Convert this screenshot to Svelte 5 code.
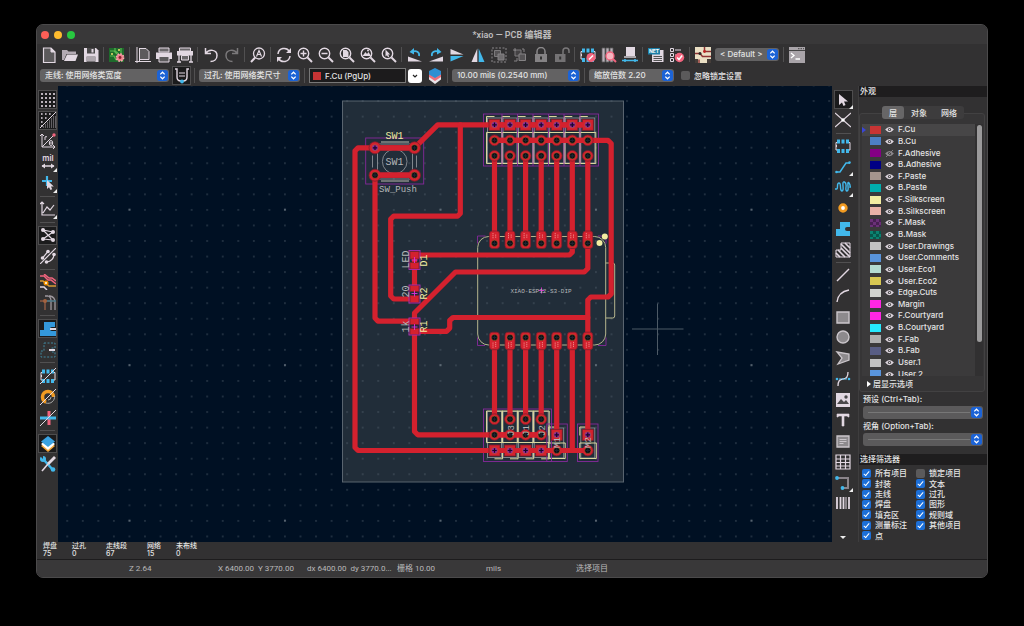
<script lang="ts">
	const W = '#e2d8e2'; // light icon parts
	const G = '#8d8a8d';
	const B = '#42b8eb';
	const P = '#f2647e';

	const magnifier = `<circle cx="6.5" cy="6.5" r="5.2" fill="none" stroke="${W}" stroke-width="1.4"/><path d="M10.5 10.5L15 15" stroke="${W}" stroke-width="2"/>`;
	const fpFrame = `<path d="M2 4.5H1V12H2M14 4.5h1V12h-1M1 7q2 1 0 2" fill="none" stroke="${W}" stroke-width="1"/><path d="M2 1.5h3v4H2zM6.5 1.5h3v4h-3zM11 1.5h3v4h-3zM2 11h3v4H2zM6.5 11h3v4h-3zM11 11h3v4h-3z" fill="${B}"/>`;

	// inner markup of every toolbar icon, on a 16x16 grid
	const icons: Record<string, string> = {
		new: `<path d="M2.5 1h7.5l4 4v10.500H2.500z" fill="#5c5a5c" stroke="${W}" stroke-width="1.2"/><path d="M10 1v4h4" fill="${W}" stroke="${W}"/>`,
		open: `<path d="M0 3h5l1.500 1.500H14V7H4.500L2 13H0z" fill="#b3aab3"/><path d="M5 7.500h11L13.500 14H2z" fill="${W}"/>`,
		save: `<path d="M1 1h12l2.500 2.500V15H1z" fill="${W}"/><path d="M4 1h8v5.500H4z" fill="#4a494a"/><path d="M8.500 2h2v3.500h-2z" fill="${W}"/><path d="M3.500 9.500h9V15h-9z" fill="#777377"/><path d="M4 11h8M4 13h8" stroke="${W}"/>`,
		board: `<path d="M0 1h15v14H0z" fill="#1e6b2c"/><path d="M1 4h4l3 3M6 1v3l3 2M1 9h4l2 4M12 1v5" stroke="#57b94f" fill="none" stroke-width="1.200"/><circle cx="3" cy="7" r="1" fill="#f2e36e"/><circle cx="10" cy="3" r="1" fill="#f2e36e"/><circle cx="11" cy="10.500" r="3.600" fill="#f0818d" stroke="#f7a9b0" stroke-width="1.600" stroke-dasharray="1.600 1.200"/><circle cx="11" cy="10.500" r="1.400" fill="#8d2030"/>`,
		page: `<path d="M4.500 1.500h6.500l3 3v8h-9.500z" fill="#5c5a5c" stroke="${W}"/><path d="M2 0v16M0 14.500h16M4.500 1v14" stroke="${W}" fill="none"/>`,
		print: `<path d="M3 1h10v4H3z" fill="#6a676a" stroke="${W}"/><path d="M0 5.500h16V12H0z" fill="${W}"/><path d="M3 9.500h10V15H3z" fill="#5c5a5c" stroke="${W}"/>`,
		plot: `<path d="M2.500 1h11v3h-11z" fill="#6a676a" stroke="${W}"/><path d="M0 4h16v4.500H0z" fill="${W}"/><path d="M2 8v7M0 15h4M14 8v7M12 15h4" stroke="${W}" stroke-width="1.300"/><path d="M4.500 8.500h7V13h-7z" fill="#6a676a" stroke="${W}"/>`,
		undo: `<path d="M2.500 1v5.500H8M2.500 6.500C6 1.500 14 2.500 14 8.500c0 4-3 6-6.500 6" fill="none" stroke="${W}" stroke-width="1.500"/>`,
		redo: `<path d="M13.500 1v5.500H8M13.500 6.500C10 1.500 2 2.500 2 8.500c0 4 3 6 6.500 6" fill="none" stroke="#7a787a" stroke-width="1.500"/>`,
		find: `<circle cx="9" cy="6.500" r="5.500" fill="none" stroke="${W}" stroke-width="1.300"/><path d="M5.200 10.500L1 15" stroke="${W}" stroke-width="2"/><path d="M6.500 9.500L9 3.500l2.500 6M7.500 7.500h3" stroke="${W}" stroke-width="1.200" fill="none"/>`,
		refresh: `<path d="M2 7a6.200 6.200 0 0 1 11.500-2.500M14 9A6.200 6.200 0 0 1 2.500 11.500" fill="none" stroke="${W}" stroke-width="1.500"/><path d="M15 1v5h-5zM1 15v-5h5z" fill="${W}"/>`,
		zoomin: magnifier + `<path d="M3.500 6.500h6M6.500 3.500v6" stroke="${W}" stroke-width="1.400"/>`,
		zoomout: magnifier + `<path d="M3.500 6.500h6" stroke="${W}" stroke-width="1.400"/>`,
		zoomfit: magnifier + `<path d="M4 3h3.500l2 2v5H4z" fill="${W}"/>`,
		zoomobj: magnifier + `<path d="M2.500 9l3-4 1.500 2 1.500-2 2.500 4z" fill="${W}"/><circle cx="8" cy="3.500" r="1" fill="${W}"/>`,
		zoomsel: magnifier + `<path d="M4.500 2.500v7l1.500-1.300 1 2 1.200-.6-1-2 2-.2z" fill="${W}"/>`,
		rotccw: `<path d="M1 9.500L15 14.500H1z" fill="${W}"/><path d="M5 5C9 3 13 5 12 9" fill="none" stroke="${B}" stroke-width="1.800"/><path d="M7 1v6.500L2.500 5z" fill="${B}"/>`,
		rotcw: `<path d="M15 9.500L1 14.500h14z" fill="${W}"/><path d="M11 5C7 3 3 5 4 9" fill="none" stroke="${B}" stroke-width="1.800"/><path d="M9 1v6.500L13.500 5z" fill="${B}"/>`,
		mirrorv: `<path d="M1.500 2v5.500h13z" fill="${W}"/><path d="M1.500 9v5.500l13-5.500z" fill="${B}"/>`,
		mirrorh: `<path d="M7.300 1.500V15H1.500z" fill="${W}"/><path d="M8.700 1.500V15h5.800z" fill="${B}"/>`,
		group: `<path d="M1 1h14v14H1z" fill="none" stroke="#8a888a" stroke-dasharray="2 1.500"/><path d="M3.500 3.500h6v6h-6z" fill="#565456" stroke="#7c7a7c"/><path d="M7 7h6v6H7z" fill="#706e70" stroke="#858385"/>`,
		ungroup: `<path d="M3 3h6v6H3z" fill="#444244" stroke="#7c7a7c"/><path d="M7 7h6.500v6.500H7z" fill="#565456" stroke="#858385"/><path d="M1 3h3M3 1v3M12 5V2h-2M5 11v3h-3" stroke="#858385" fill="none"/>`,
		lock: `<path d="M4 7V4.500a4 4 0 0 1 8 0V7" fill="none" stroke="#8a888a" stroke-width="1.500"/><path d="M2 7h12v8H2z" fill="#858385"/><path d="M8 9.500v3" stroke="#333" stroke-width="2"/>`,
		unlock: `<path d="M9 7V4a3 3 0 0 1 6 0v2" fill="none" stroke="#7a787a" stroke-width="1.500"/><path d="M1 7h10.500v8H1z" fill="#747274"/><path d="M6.200 9.500v3" stroke="#333" stroke-width="2"/>`,
		fpedit: fpFrame + `<circle cx="11" cy="10.500" r="4.500" fill="${P}"/><path d="M9 12.500l4-4" stroke="#fff" stroke-width="1.500"/>`,
		library: `<path d="M1 1h3v14H1zM5 1h3v14H5zM9 1h3v14H9z" fill="#b8afb8" stroke="#5c5a5c" stroke-width=".8"/><circle cx="9" cy="9" r="4" fill="#f6b5c0" stroke="${P}" stroke-width="1.300"/><path d="M12 12l3 3" stroke="${P}" stroke-width="2"/>`,
		update: `<path d="M4 0h9v9H4z" fill="${W}"/><path d="M2 9h12v2H2z" fill="#aaa5aa"/><path d="M0 13.500h16" stroke="${B}" stroke-width="1.600" fill="none"/><path d="M3 12v3M13 12v3" stroke="${B}" stroke-width="1.500"/>`,
		net: `<path d="M4 3h11.500v12H4z" fill="${W}"/><path d="M0 1h12v6.500H0z" fill="#1d7fa8"/><text x="6" y="6.200" font-size="5" font-weight="700" text-anchor="middle" fill="#fff" font-family="Inter, sans-serif">NET</text><path d="M5.500 9.500h8.500M5.500 11.500h8.500M5.500 13.500h8.500" stroke="#555"/>`,
		drc: `<path d="M1.500 1.500h3v3h-3zM1.500 6.500h3v3h-3zM1.500 11.500h3v3h-3z" fill="none" stroke="${W}"/><path d="M6 3h6M6 8h3" stroke="${W}"/><circle cx="10.500" cy="10.500" r="4.700" fill="${P}"/><path d="M8.200 10.500l1.800 2 3.200-4" fill="none" stroke="#fff" stroke-width="1.500"/>`,
		router: `<path d="M0 0h16v16H0z" fill="#eadfc4"/><path d="M0 6.500h5l2.500 3H16M9.500 0v4.500H16M4 16v-3.500" fill="none" stroke="#8e3434" stroke-width="1.500"/><circle cx="5" cy="6.500" r="1.500" fill="#2c2626"/><circle cx="9.500" cy="4.500" r="1.400" fill="#b22"/><path d="M12 12h4v4h-4zM0 12h3v4H0z" fill="#453d39"/>`,
		terminal: `<path d="M0 0h16v16H0z" fill="#a9a4a9"/><path d="M0 3.500h16" stroke="#444"/><path d="M9 1.700h1.500M11.500 1.700h1.500M14 1.700h1" stroke="#444"/><path d="M2 6l3 2.500L2 11M6.500 12H11" fill="none" stroke="#fff" stroke-width="1.300"/>`,
		trackauto: `<path d="M1 1h2v8q0 4 4 4h2q4 0 4-4V1h2" fill="none" stroke="${W}" stroke-width="1.400"/><path d="M5 5h6M5 8h6" stroke="${W}"/><circle cx="8" cy="13.500" r="1.900" fill="${B}"/>`,
		layers: `<path d="M8 6l6 2.500v3L8 16l-6-4.500v-3z" fill="#e8e4e8"/><path d="M8 3.500l6 2.500v3L8 13 2 9V6z" fill="#ed6f7c"/><path d="M8 0l6 3v3.500L8 10 2 6.500V3z" fill="#2e8fd2"/>`,
		grid: `<g fill="${W}">${[2, 6, 10, 14].map((y) => [2, 6, 10, 14].map((x) => `<circle cx="${x}" cy="${y}" r="1.100"/>`).join('')).join('')}</g>`,
		gridover: `<g stroke="${W}" stroke-width="1.600" stroke-dasharray="1.600 2.400"><path d="M1 2h11M1 6h8M1 10h4M1 14h2"/></g><g stroke="#aaa5aa" stroke-dasharray="1 1"><path d="M13 5h3M11 7h5M9 9h7M7 11h9M5 13h11M3 15h13"/></g><path d="M0 16L16 0" stroke="${W}"/>`,
		polar: `<path d="M2 1v13h13M0 3l2-2 2 2M13 12l2 2-2 2M2 14L14 2" fill="none" stroke="${W}"/><circle cx="14" cy="2" r="1.700" fill="${P}"/><path d="M5 7V4q1-1 2 0" fill="none" stroke="${W}"/><ellipse cx="11" cy="10" rx="1.700" ry="2.500" fill="none" stroke="${W}"/><path d="M9.500 10h3" stroke="${W}"/>`,
		mil: `<text x="8" y="7" font-size="8" font-weight="600" text-anchor="middle" fill="${W}" font-family="Inter, sans-serif">mil</text><path d="M2 12h12" stroke="${W}" stroke-width="1.600"/><path d="M5 9.500v5L1.500 12zM11 9.500v5l3.500-2.500z" fill="${W}"/>`,
		cursor: `<path d="M7 1v10M2 6h10" stroke="${B}" stroke-width="2.200"/><path d="M7 5v9l2-1.800L10.500 15l1.700-.8L11 11.500h2.800z" fill="${W}"/>`,
		axes: `<path d="M2 1v13h13M0 3l2-2 2 2M3 12l4-6 3 3 4-5" fill="none" stroke="${W}" stroke-width="1.200"/>`,
		ratsnest: `<path d="M3 3l10 2M3 3l10 10M3 12l10-7M3 12l10 1" stroke="${W}" stroke-width="1.200"/><g fill="${W}"><circle cx="3" cy="3" r="2"/><circle cx="13" cy="5" r="2"/><circle cx="3" cy="12" r="2"/><circle cx="13" cy="13" r="2"/></g>`,
		curved: `<path d="M0 16L16 0M2.500 10L8 3.500M6.500 14q7-1 7.500-7.500" fill="none" stroke="${W}" stroke-width="1.200"/><g fill="${W}"><circle cx="2.500" cy="10" r="1.800"/><circle cx="8" cy="3.500" r="1.800"/><circle cx="6.500" cy="14" r="1.800"/><circle cx="14" cy="6.500" r="1.800"/></g>`,
		contrast: `<path d="M0 2h4l4 4h3l5 4M4 0l5 4h3l4 3" fill="none" stroke="${P}" stroke-width="1.500"/><path d="M0 7h3l6 5h7" stroke="#d99a35" stroke-width="1.500" fill="none"/><path d="M0 13h4l3 3" fill="none" stroke="${W}" stroke-width="1.500"/><circle cx="6" cy="9" r="2.500" fill="#f29100"/><circle cx="6" cy="9" r="1" fill="#fff"/>`,
		netcolor: `<path d="M0 6h15M5 6v9" stroke="#8d5a43" stroke-width="1.500" fill="none"/><path d="M5 1h3q3 1 3 5v9M9 1h1q5 1 5 6v8" fill="none" stroke="#9e989e" stroke-width="1.300"/><path d="M7 6h9" stroke="#45788c" stroke-width="1.500"/><circle cx="5" cy="6" r="2" fill="#a36340"/>`,
		zonefill: `<path d="M4 1h11v5h-3a2 2 0 0 0 0 4h4v5H0V9h4z" fill="#3498db"/><path d="M10 7h6v2h-6z" fill="${W}"/>`,
		zoneoutline: `<path d="M4 1h11v5h-3a2 2 0 0 0 0 4h3v5H1V9h3z" fill="none" stroke="#41879d" stroke-dasharray="2 1.500"/><path d="M9 7h6v2H9z" fill="${W}"/>`,
		padsketch: fpFrame + `<path d="M0 16L16 0" stroke="${W}" fill="none"/>`,
		viasketch: `<circle cx="8" cy="8" r="5.500" fill="none" stroke="#f29b22" stroke-width="3.500"/><path d="M8 8h8v8H5z" fill="#323132"/><path d="M6 14a6.500 6.500 0 0 0 8.500-7M8 11a3 3 0 0 0 3-3" stroke="#aaa" fill="none"/><path d="M0 16L16 0" stroke="${W}"/>`,
		tracksketch: `<path d="M9 1v14" stroke="${P}" stroke-width="3"/><path d="M0 8h16" stroke="${B}" stroke-width="3"/><path d="M0 16L16 0" stroke="${W}"/>`,
		layermgr: `<path d="M8 5l7 5-7 6-7-6z" fill="#f2a63a"/><path d="M8 3l7 5-7 6-7-6z" fill="#fff"/><path d="M8 0l7 5.500L8 11 1 5.500z" fill="#3aa3e3"/>`,
		properties: `<path d="M4 4l9 10" stroke="${B}" stroke-width="2.500"/><circle cx="3" cy="3" r="3" fill="${B}"/><path d="M0 0h3v3z" fill="#323132"/><circle cx="13" cy="13.500" r="2.300" fill="${B}"/><path d="M15 1L8 8" stroke="${W}" stroke-width="2.800"/><path d="M8 8l-6 7" stroke="${W}" stroke-width="1.600"/>`,
		select: `<path d="M4 2v11l3-2.500 1.500 3.500 2-1-1.500-3.500h4z" fill="${W}"/>`,
		local: `<path d="M0 1l16 14M16 1L0 15" stroke="${W}" stroke-width="1.200"/><circle cx="8" cy="8" r="1.700" fill="#fff"/>`,
		footprint: fpFrame,
		track: `<path d="M1 13h4l6-9h4" fill="none" stroke="${B}" stroke-width="1.500"/><circle cx="1.500" cy="13" r="1.300" fill="${B}"/><circle cx="14.500" cy="3.500" r="1.300" fill="${B}"/>`,
		tune: `<path d="M0 10h1.500q1 0 1-3T4 4t1.500 4T7 12t1-5 1.500-4T11 8t1 4 1-5 1-3 1 4h1" fill="none" stroke="${B}" stroke-width="1.400"/>`,
		via: `<circle cx="8" cy="8" r="3.300" fill="#fff" stroke="#f29b22" stroke-width="2.800"/>`,
		zone: `<path d="M5 1h10v5h-3a2 2 0 0 0 0 4h3v5H1V8h4z" fill="${B}"/>`,
		rule: `<path d="M6 1h9v14H1V8h5z" fill="none" stroke="${W}"/><path d="M6 2l9 9M6 6l9 9M3 8l7 7M1 11l4 4M10 1l5 5" stroke="${W}" stroke-width="1.600"/>`,
		line: `<path d="M2 14L14 2" stroke="${W}" stroke-width="1.400"/>`,
		arc: `<path d="M2 14Q3 4 14 2" fill="none" stroke="${W}" stroke-width="1.400"/>`,
		rect: `<path d="M2 3h12v11H2z" fill="${G}" stroke="#cbc6cb" stroke-width="1.400"/>`,
		circle: `<circle cx="8" cy="8" r="6" fill="${G}" stroke="#cbc6cb" stroke-width="1.400"/>`,
		poly: `<path d="M2 2l12 2v6L3 14l4-6z" fill="${G}" stroke="#cbc6cb" stroke-width="1.300"/>`,
		bezier: `<path d="M3 15q0-7 5-7t5-7" fill="none" stroke="${W}" stroke-width="1.300"/><path d="M1 8h13" stroke="${B}" stroke-dasharray="2 1"/><circle cx="2" cy="8" r="1.300" fill="${B}"/><circle cx="14" cy="8" r="1.300" fill="${B}"/>`,
		image: `<path d="M1 1h14v14H1z" fill="${W}"/><path d="M2 12l4-5 3 3 2-2 3 4z" fill="#4a484a"/><circle cx="11" cy="5" r="1.700" fill="#4a484a"/>`,
		text: `<path d="M2 2h12v3h-1l-.6-1H9v10H7V4H3.600L3 5H2z" fill="${W}" stroke="${W}" stroke-width=".6"/>`,
		textbox: `<path d="M2 3h12v11H2z" fill="${G}" stroke="#cbc6cb" stroke-width="1.300"/><path d="M4.500 6.500h7M4.500 8.500h7M4.500 10.500h4" stroke="#c9c4c9"/>`,
		table: `<path d="M1 1h14v14H1zM1 5h14M1 8.500h14M1 12h14M5.500 1v14M10.500 1v14" fill="none" stroke="${W}" stroke-width="1.200"/>`,
		dimension: `<path d="M2 3h12M8 13h6M13 4v8" stroke="${W}" fill="none"/><circle cx="2" cy="3" r="1.900" fill="${B}"/><circle cx="7.500" cy="13" r="1.900" fill="${B}"/>`,
		barcode: `<path d="M2 2v12M5.500 2v12M8.500 2v12M14 2v12" stroke="${W}" stroke-width="1.800"/><path d="M11 2v12" stroke="${W}"/>`
	};

	// '|' is a separator
	const mainTools = 'new open save | board | page print plot | undo redo | find | refresh zoomin zoomout zoomfit zoomobj zoomsel | rotccw rotcw mirrorv mirrorh group ungroup lock unlock | fpedit library update | net drc | router'.split(' ');
	const leftTools = 'grid gridover polar mil cursor | axes | ratsnest curved | contrast netcolor | zonefill zoneoutline | padsketch viasketch tracksketch | layermgr properties'.split(' ');
	const rightTools = 'select local | footprint track tune via zone rule | line arc rect circle poly bezier image text textbox table dimension barcode'.split(' ');
	const active = ['grid', 'gridover', 'ratsnest', 'zonefill', 'layermgr', 'select', 'trackauto'];
	const hasMenu = ['mil', 'cursor', 'axes', 'select', 'track', 'tune', 'dimension'];

	const layers = [
		['F.Cu', '#c83434'],
		['B.Cu', '#4d7fc4'],
		['F.Adhesive', '#840084'],
		['B.Adhesive', '#000084'],
		['F.Paste', '#a4958e'],
		['B.Paste', '#00adad'],
		['F.Silkscreen', '#f2eda1'],
		['B.Silkscreen', '#e8b2a7'],
		['F.Mask', '#6b3079'],
		['B.Mask', '#0b8271'],
		['User.Drawings', '#c2c2c2'],
		['User.Comments', '#5994dc'],
		['User.Eco1', '#b4dbd2'],
		['User.Eco2', '#d8c852'],
		['Edge.Cuts', '#d0d2cd'],
		['Margin', '#ff26e2'],
		['F.Courtyard', '#ff26e2'],
		['B.Courtyard', '#26e9ff'],
		['F.Fab', '#afafaf'],
		['B.Fab', '#585d84'],
		['User.1', '#c2c2c2'],
		['User.2', '#5994dc']
	];

	const filters = [
		'所有项目', '锁定项目', '封装', '文本', '走线', '过孔', '焊盘', '图形',
		'填充区', '规则域', '测量标注', '其他项目', '点'
	];

	const counts = [
		['焊盘', '75'],
		['过孔', '0'],
		['走线段', '67'],
		['网络', '15'],
		['未布线', '0']
	];

	// board geometry
	const pins = [494.5, 510, 525.6, 541.2, 556.7, 572.3, 587.8];
	const lowerEnds = [419.7, 419.7, 419.7, 419.7, 435.3, 451, 435.3];
	const tracks = [
		'M375 148.300H358L355 151.300V448L358 451H587.800',
		'M375 148.300H414.500L437.700 125.300H587.800',
		'M375 175.700H414.500',
		'M460.300 125.300V214L457.600 216.700H393.700L390.700 219.700V296.500L393.700 299.500H414.500',
		'M375 175.700V318.500L378 321.700H414.500',
		'M414.500 290V255.500H569.500L572.300 252.700V243.500',
		'M587.800 243.500V269L584.300 272.500H455.500L414.500 313.500V322',
		'M414.500 331.800V432L417.700 435.300H541.200',
		'M414.500 331.800H446.500L449.700 328.600V321L453 318H587.800',
		'M587.800 338V300.500L590.800 297.500H608L611.200 294.500V144L608 140.800H494.500'
	];
</script>

{#snippet tool(name: string)}
	{#if name === '|'}
		<span class="sep"></span>
	{:else}
		<button class="tool" class:active={active.includes(name)} class:menu={hasMenu.includes(name)} aria-label={name}>
			<svg viewBox="0 0 16 16">{@html icons[name]}</svg>
		</button>
	{/if}
{/snippet}

{#snippet dropdown(label: string, value: string, cls: string)}
	<span class="dropdown {cls}">
		<select aria-label={label}><option>{value}</option></select>
		<svg class="stepper" viewBox="0 0 10 10"><rect width="10" height="10" rx="2.500" /><path d="M3 4L5 2l2 2M3 6l2 2 2-2" /></svg>
	</span>
{/snippet}

{#snippet hole(x: number, y: number, first: boolean)}
	<circle cx={x} cy={y} r="3.100" fill={first ? '#8f1f9a' : '#080c12'} stroke="#a8702c" stroke-width=".5" />
	<path d="M{x - 2.200} {y}h4.400M{x} {y - 2.200}v4.400" stroke={first ? '#150a2a' : '#1b2530'} stroke-width="1.200" />
{/snippet}

<div class="desktop">
	<div class="window">
		<header class="titlebar">
			<div class="lights">
				<button class="close" aria-label="Close"></button>
				<button class="minimize" aria-label="Minimize"></button>
				<button class="zoom" aria-label="Zoom"></button>
			</div>
			<h1>*xiao — PCB 编辑器</h1>
		</header>

		<div class="toolbar">
			{#each mainTools as name}{@render tool(name)}{/each}
			{@render dropdown('Variant', '< Default >', 'variant')}
			<span class="sep"></span>
			{@render tool('terminal')}
		</div>

		<div class="toolbar">
			{@render dropdown('Track width', '走线: 使用网络类宽度', 'w-track')}
			{@render tool('trackauto')}
			<span class="sep"></span>
			{@render dropdown('Via size', '过孔: 使用网络类尺寸', 'w-via')}
			<span class="sep"></span>
			<span class="layer-box">
				<i class="swatch"></i>
				<select aria-label="Layer"><option>F.Cu (PgUp)</option></select>
				<svg viewBox="0 0 14 14"><rect width="14" height="14" rx="3" fill="#fff" /><path d="M5 6l2 2 2-2" fill="none" stroke="#222" stroke-width="1.200" /></svg>
			</span>
			{@render tool('layers')}
			<span class="sep"></span>
			{@render dropdown('Grid', '10.00 mils (0.2540 mm)', 'w-grid')}
			<span class="sep"></span>
			{@render dropdown('Zoom', '缩放倍数 2.20', 'w-zoom')}
			<label class="check lock-check"><input type="checkbox" />忽略锁定设置</label>
		</div>

		<div class="workspace">
			<div class="side left">
				<div class="tools">{#each leftTools as name}{@render tool(name)}{/each}</div>
			</div>

			<div class="canvas">
				<svg viewBox="58 86 774 457" preserveAspectRatio="xMidYMid slice">
					<defs>
						<pattern id="minor" x="59.500" y="93.800" width="15.550" height="15.550" patternUnits="userSpaceOnUse">
							<rect x="7.200" y="7.200" width="1.100" height="1.100" fill="#5d6b78" />
						</pattern>
						<pattern id="major" x="51.800" y="287.900" width="155.500" height="155.500" patternUnits="userSpaceOnUse">
							<path d="M77.700 76.700v2M76.700 77.700h2" stroke="#7b8792" stroke-width=".7" />
						</pattern>
					</defs>
					<rect x="342.500" y="101.500" width="281" height="381" fill="#212d39" stroke="#59646f" />
					<rect x="58" y="86" width="774" height="457" fill="url(#minor)" />
					<rect x="58" y="86" width="774" height="457" fill="url(#major)" />

					<!-- fab outlines -->
					<g fill="none" stroke="#8b9095" stroke-width=".9">
						<circle cx="394.700" cy="162" r="12.300" />
						<rect x="377.500" y="144.500" width="35" height="35" />
						<path d="M372.500 156v12M416.500 156v12" />
						{#each pins as x}
							<rect x={x - 7} y="118.500" width="14" height="45" />
						{/each}
						{#each pins.slice(0, 4) as x}
							<rect x={x - 7} y="412" width="14" height="46" />
						{/each}
						<rect x="549.700" y="428.500" width="14" height="30" />
						<rect x="580.800" y="428.500" width="14" height="30" />
					</g>

					<!-- silkscreen -->
					<g fill="none" stroke="#d9d69b" stroke-width="1">
						<path d="M381 142.500h28M381 181.500h28" stroke="#6e7374" stroke-width="2" />
						{#each pins as x}
							<path d="M{x - 8} 133h16v31h-16zM{x - 8} 126v-9h8" />
						{/each}
						{#each pins.slice(0, 4) as x}
							<path d="M{x - 8} 443v-31.500h16v31.500zM{x} 459.300h8v-8" />
						{/each}
						<path d="M548.700 443.500h16.500v15.500h-16.500zM548.700 436v-8.500h8" />
						<path d="M579.800 443.500h16.500v15.500h-16.500zM579.800 436v-8.500h8" />
						<rect x="477.700" y="237" width="128" height="108.500" rx="11" stroke="#b6b68e" />
						<path d="M605.700 263.500h7q2 0 2 2v51q0 2-2 2h-7" stroke="#b6b68e" />
					</g>

					<!-- courtyards -->
					<g fill="none" stroke="#86299b" stroke-width=".9">
						<rect x="365.700" y="138.500" width="58" height="46" />
						<rect x="483.500" y="114.500" width="115" height="52" />
						<path d="M477.500 244v-7.500h8M598 236.500h8v7.500M606 338v8h-8M485 346h-7.500v-8" />
						<rect x="483.500" y="409.500" width="68" height="52.500" />
						<rect x="546.800" y="424.500" width="20.500" height="37.500" />
						<rect x="577.500" y="424.500" width="20.500" height="37.500" />
						<path d="M502 114.500v52M517.500 114.500v52M533 114.500v52M548.500 114.500v52M564 114.500v52M580 114.500v52" />
					</g>

					<!-- front copper -->
					<g fill="none" stroke="#d4212e" stroke-width="5.200" stroke-linejoin="round" stroke-linecap="round">
						{#each tracks as d}<path {d} />{/each}
						{#each pins as x, i}
							<path d="M{x} 156.300V243.500M{x} 338V{lowerEnds[i]}" />
						{/each}
					</g>

					<g fill="#d4212e" stroke="#7d202b" stroke-width=".8">
						{#each [[375, 148.3], [414.500, 148.3], [375, 175.7], [414.500, 175.7]] as [x, y]}
							<circle cx={x} cy={y} r="6" />
						{/each}
						{#each pins as x, i}
							<rect x={x - 5.500} y="119.800" width="11" height="11" />
							<circle cx={x} cy="140.800" r="5.400" />
							<circle cx={x} cy="156.300" r="5.400" />
							<rect x={x - 5} y="231.500" width="10" height="17.500" rx="3" />
							<rect x={x - 5} y="332.700" width="10" height="17.500" rx="3" />
							{#if i < 4}
								<circle cx={x} cy="419.700" r="5.400" />
								<circle cx={x} cy="435.300" r="5.400" />
								<rect x={x - 5.500} y="445.500" width="11" height="11" />
							{/if}
						{/each}
						<rect x="551.200" y="429.800" width="11" height="11" />
						<rect x="582.300" y="429.800" width="11" height="11" />
						<circle cx="556.700" cy="451" r="5.400" />
						<circle cx="587.800" cy="451" r="5.400" />
						<rect x="410" y="252" width="9" height="7.500" />
						<rect x="410" y="263" width="9" height="6.500" />
						<rect x="410" y="286" width="9" height="6" />
						<rect x="410" y="296" width="9" height="7" />
						<rect x="410" y="319" width="9" height="6" />
						<rect x="410" y="329" width="9" height="6" />
					</g>
					<path d="M494.500 125.300H587.800M494.500 140.800H587.800M494.500 435.300H541.200M494.500 451H587.800M375 148.300H414.500M375 175.700H414.500" stroke="#d4212e" stroke-width="5.200" />

					{@render hole(375, 148.3, true)}
					{@render hole(414.5, 148.3, false)}
					{@render hole(375, 175.7, false)}
					{@render hole(414.5, 175.7, false)}
					{#each pins as x, i}
						{@render hole(x, 125.3, true)}
						{@render hole(x, 140.8, false)}
						{@render hole(x, 156.3, false)}
						{@render hole(x, 243.8, false)}
						{@render hole(x, 338, false)}
						<path d="M{x - 1.500} 233.500v6M{x + 1.200} 235v4M{x - 1.500} 343v6M{x + 1.200} 342.500v5" stroke="#f39a95" stroke-width=".8" stroke-dasharray="1.300 .7" />
						{#if i < 4}
							{@render hole(x, 419.7, false)}
							{@render hole(x, 435.3, false)}
							{@render hole(x, 451, true)}
						{/if}
					{/each}
					{@render hole(556.7, 435.3, true)}
					{@render hole(556.7, 451, false)}
					{@render hole(587.8, 435.3, true)}
					{@render hole(587.8, 451, false)}

					<g fill="none" stroke="#b02bb4" stroke-width=".9">
						<rect x="409" y="251" width="11" height="19" />
						<rect x="409" y="285.500" width="11" height="18" />
						<rect x="409" y="318.500" width="11" height="17" />
						<path d="M411.500 260.500h6M414.500 257.500v6M411.500 294h6M414.500 291v6M411.500 327.500h6M414.500 324.500v6M538.500 291h6M541.500 288v6" stroke="#e02fd8" />
					</g>
					<circle cx="604.800" cy="237" r="3" fill="#f2eda1" />
					<circle cx="599.500" cy="243.500" r="3" fill="#f2eda1" />

					<g class="fab">
						<text class="ref" x="394.500" y="165.500">SW1</text>
						<text x="398" y="192">SW_Push</text>
						<text class="tiny" x="541" y="293">XIAO-ESP32-S3-DIP</text>
						<text class="ref" transform="translate(409 260) rotate(-90)">LED</text>
						<text class="ref" transform="translate(409 292) rotate(-90)">20</text>
						<text class="ref" transform="translate(409 327) rotate(-90)">1k</text>
						<text transform="translate(513.500 431) rotate(-90)">J3</text>
						<text transform="translate(529 431) rotate(-90)">J1</text>
						<text transform="translate(544.500 431) rotate(-90)">J2</text>
						<text transform="translate(560 443) rotate(-90)">M1</text>
						<text transform="translate(591 443) rotate(-90)">M2</text>
					</g>
					<g class="silk">
						<text class="ref" x="394.500" y="139.500">SW1</text>
						<text class="ref" transform="translate(427 261) rotate(-90)">D1</text>
						<text class="ref" transform="translate(427 294) rotate(-90)">R2</text>
						<text class="ref" transform="translate(427 327) rotate(-90)">R1</text>
					</g>

					<path d="M632 329.500h51.500M657.500 304v51.500" stroke="#4d5a66" />
				</svg>
			</div>

			<div class="side right">
				<div class="tools">{#each rightTools as name}{@render tool(name)}{/each}</div>
				<button class="more" aria-label="More tools"></button>
			</div>

			<aside class="panel">
				<h2>外观</h2>
				<div class="tabs">
					<button class="selected">层</button>
					<button>对象</button>
					<button>网络</button>
				</div>
				<div class="layer-pane">
					<div class="layer-scroll">
						<ul>
							{#each layers as [name, color], i}
								<li class:current={i === 0}>
									<span class="marker"></span>
									<i class:checker={name.endsWith('Mask')} style="background-color: {color}"></i>
									<svg class:off={name === 'F.Adhesive'} viewBox="0 0 10 8">
										<path d="M0 4Q5-2 10 4Q5 10 0 4z" fill="#ddd5dd" /><circle cx="5" cy="4" r="1.800" fill="#444" /><circle cx="5" cy="4" r=".8" fill="#ddd5dd" />
										{#if name === 'F.Adhesive'}<path d="M1 8L9 0" stroke="#ddd5dd" />{/if}
									</svg>
									<span>{name}</span>
								</li>
							{/each}
						</ul>
						<div class="track"><div class="thumb"></div></div>
					</div>
					<button class="disclosure"><i></i>层显示选项</button>
				</div>
				<div class="presets">
					<label for="preset">预设 (Ctrl+Tab):</label>
					<span class="dropdown blank">
						<select id="preset"><option></option></select>
						<svg class="stepper" viewBox="0 0 10 10"><rect width="10" height="10" rx="2.500" /><path d="M3 4L5 2l2 2M3 6l2 2 2-2" /></svg>
					</span>
					<label for="viewport">视角 (Option+Tab):</label>
					<span class="dropdown blank">
						<select id="viewport"><option></option></select>
						<svg class="stepper" viewBox="0 0 10 10"><rect width="10" height="10" rx="2.500" /><path d="M3 4L5 2l2 2M3 6l2 2 2-2" /></svg>
					</span>
				</div>
				<h2>选择筛选器</h2>
				<div class="filters">
					{#each filters as name}
						<label class="check"><input type="checkbox" checked={name !== '锁定项目'} />{name}</label>
					{/each}
				</div>
			</aside>
		</div>

		<dl class="counts">
			{#each counts as [name, value]}
				<div><dt>{name}</dt><dd>{value}</dd></div>
			{/each}
		</dl>

		<footer class="status">
			<span>Z 2.64</span>
			<span>X 6400.00&nbsp; Y 3770.00</span>
			<span>dx 6400.00&nbsp; dy 3770.0...</span>
			<span>栅格 10.00</span>
			<span>mils</span>
			<span>选择项目</span>
		</footer>
	</div>
</div>

<style>
	:global(body) {
		background: #000;
	}

	.desktop {
		box-sizing: border-box;
		height: 100vh;
		min-height: 600px;
		padding: 24px 36px 48px;
		font-family: Inter, 'Noto Sans CJK SC', sans-serif;
		font-size: 8px;
		font-weight: 500;
		line-height: 10px;
		color: #e4e4e4;
	}

	.window {
		box-sizing: border-box;
		height: 100%;
		display: flex;
		flex-direction: column;
		background: #323132;
		border: 1px solid #4b4a4b;
		border-radius: 7px;
		overflow: hidden;
	}

	button,
	select {
		font: inherit;
		color: inherit;
		border: 0;
		padding: 0;
		margin: 0;
		background: none;
	}

	.titlebar {
		display: grid;
		grid-template-columns: 1fr auto 1fr;
		align-items: center;
		height: 19px;
		padding: 0 4px;
		background: #393839;
	}

	.titlebar h1 {
		margin: 0;
		font-family: Roboto, 'Noto Sans CJK SC', sans-serif;
		font-size: 9px;
		font-weight: 600;
		line-height: 10px;
		color: #bdbcbd;
	}

	.lights {
		display: flex;
		gap: 5px;
	}

	.lights button {
		width: 8px;
		height: 8px;
		border-radius: 50%;
	}

	.close {
		background: #fe5f57;
	}

	.minimize {
		background: #febb2e;
	}

	.zoom {
		background: #28c840;
	}

	.toolbar {
		display: flex;
		align-items: center;
		gap: 4px;
		height: 21px;
		padding: 0 3px;
	}

	.tool {
		position: relative;
		flex: none;
		display: grid;
		place-items: center;
		width: 17px;
		height: 17px;
		box-sizing: border-box;
	}

	.tool svg {
		width: 16px;
		height: 16px;
	}

	.tool.active {
		background: #1b1b1c;
		outline: 1px solid #4e4d4e;
	}

	.tool.menu::after {
		content: '';
		position: absolute;
		right: -1px;
		bottom: -1px;
		border: 2px solid transparent;
		border-right-color: #eee;
		border-bottom-color: #eee;
	}

	.sep {
		flex: none;
		width: 1px;
		height: 15px;
		background: #515051;
	}

	.dropdown {
		display: grid;
		align-items: center;
	}

	.dropdown select {
		grid-area: 1 / 1;
		appearance: none;
		height: 13px;
		padding: 0 16px 0 5px;
		border-radius: 3px;
		background: #636263;
		line-height: 13px;
	}

	.stepper {
		grid-area: 1 / 1;
		justify-self: end;
		width: 11px;
		height: 11px;
		margin-right: 1px;
		pointer-events: none;
	}

	.stepper rect {
		fill: #1c63d6;
	}

	.stepper path {
		fill: none;
		stroke: #fff;
		stroke-width: 1.1;
	}

	.variant {
		width: 64px;
	}

	.w-track {
		width: 129px;
	}

	.w-via {
		width: 101px;
	}

	.w-grid {
		width: 128px;
	}

	.w-zoom {
		width: 85px;
	}

	.layer-box {
		display: flex;
		align-items: center;
		width: 113px;
	}

	.layer-box .swatch {
		width: 8px;
		height: 8px;
		margin: 0 -12px 0 4px;
		z-index: 1;
		background: #c83434;
	}

	.layer-box select {
		flex: 1;
		appearance: none;
		height: 15px;
		padding-left: 15px;
		border: 1px solid #777;
		background: #1c1b1c;
	}

	.layer-box svg {
		width: 14px;
		height: 14px;
		margin-left: 2px;
	}

	.check {
		display: flex;
		align-items: center;
		gap: 4px;
		white-space: nowrap;
	}

	.check input {
		appearance: none;
		flex: none;
		display: grid;
		place-items: center;
		width: 9px;
		height: 9px;
		margin: 0;
		border-radius: 2px;
		background: #5b5a5b;
	}

	.check input:checked {
		background: #1c6fd8;
	}

	.check input:checked::before {
		content: '';
		width: 2px;
		height: 5px;
		margin-bottom: 1px;
		border: solid #fff;
		border-width: 0 1px 1px 0;
		transform: rotate(40deg);
	}

	.lock-check {
		margin-left: 3px;
	}

	.workspace {
		flex: 1;
		min-height: 0;
		display: flex;
	}

	.side {
		flex: none;
		display: flex;
		flex-direction: column;
		justify-content: space-between;
		align-items: center;
		padding: 5px 0 2px;
		box-sizing: border-box;
	}

	.left {
		width: 21px;
	}

	.right {
		width: 26px;
		padding-right: 4px;
	}

	.tools {
		display: flex;
		flex-direction: column;
		align-items: center;
		justify-content: space-between;
		height: 382px;
	}

	.right .tools {
		height: 421px;
	}

	.tools .sep {
		width: 15px;
		height: 1px;
	}

	.more {
		border: 3px solid transparent;
		border-top-color: #eee;
		border-bottom: 0;
		margin-bottom: 1px;
	}

	.canvas {
		flex: 1;
		min-width: 0;
		background: #001023;
	}

	.canvas svg {
		display: block;
		width: 100%;
		height: 100%;
	}

	.canvas text {
		font-family: 'Liberation Mono', monospace;
		font-size: 9px;
		font-weight: 400;
		text-anchor: middle;
	}

	.canvas .ref {
		font-size: 10px;
	}

	.canvas .tiny {
		font-size: 6px;
	}

	.fab {
		fill: #b4b6b8;
	}

	.silk {
		fill: #f2eda1;
	}

	.panel {
		flex: none;
		width: 129px;
		border-left: 1px solid #3e3d3e;
		box-sizing: border-box;
	}

	.panel h2 {
		margin: 0;
		padding-left: 1px;
		font: inherit;
		line-height: 11px;
		background: #1e1d1e;
	}

	.tabs {
		position: relative;
		display: flex;
		width: 82px;
		margin: 9px auto -6px;
		border-radius: 3px;
		background: #3d3c3d;
	}

	.tabs button {
		flex: 1;
		height: 13px;
	}

	.tabs .selected {
		flex: none;
		width: 22px;
		border-radius: 3px;
		background: #676667;
	}

	.layer-pane {
		margin-right: 2px;
		padding: 10px 1px 0 2px;
		border: 1px solid #424142;
		border-radius: 3px;
		background: #363536;
	}

	.layer-scroll {
		display: flex;
		height: 252px;
		overflow: hidden;
		background: #3b3a3b;
	}

	.layer-scroll ul {
		flex: 1;
		display: grid;
		grid-auto-rows: 1fr;
		height: 256px;
		margin: 0;
		padding: 0;
		list-style: none;
	}

	.layer-scroll li {
		display: grid;
		grid-template-columns: 4px 11px 9px 1fr;
		align-items: center;
		column-gap: 4px;
	}

	.layer-scroll li > span:last-child {
		line-height: 11px;
	}

	.layer-scroll .current {
		background: #474647;
	}

	.current .marker {
		border: 3px solid transparent;
		border-left: 4px solid #3a46d8;
		border-right: 0;
	}

	.layer-scroll i {
		height: 8px;
	}

	.layer-scroll .checker {
		background-image: conic-gradient(#0005 25%, transparent 0 50%, #0005 0 75%, transparent 0);
		background-size: 6px 6px;
	}

	.layer-scroll svg {
		width: 9px;
		height: 7px;
	}

	.layer-scroll .off {
		opacity: 0.5;
	}

	.track {
		width: 8px;
		background: #313031;
		display: flex;
		justify-content: center;
	}

	.thumb {
		width: 5px;
		height: 217px;
		margin-top: 1px;
		border-radius: 3px;
		background: #9b9a9b;
	}

	.disclosure {
		display: flex;
		align-items: center;
		gap: 2px;
		height: 15px;
		padding-left: 5px;
	}

	.disclosure i {
		border: 3px solid transparent;
		border-left: 4px solid #fff;
		border-right: 0;
	}

	.presets {
		display: flex;
		flex-direction: column;
		padding: 1px 4px 7px;
	}

	.presets label {
		line-height: 13px;
	}

	.blank select {
		width: 100%;
		background: linear-gradient(#777, #777) 5px 6px / 102px 1px no-repeat #5b5a5b;
	}

	.presets .dropdown {
		margin-bottom: 1px;
	}

	.filters {
		display: grid;
		grid-template-columns: 54px 1fr;
		grid-auto-rows: 1fr;
		height: 73px;
		margin: 3px 0 0 3px;
	}

	.counts {
		display: flex;
		gap: 15px;
		height: 17px;
		margin: 0;
		padding-left: 6px;
		font-size: 7px;
		line-height: 8px;
	}

	.counts div:nth-child(2),
	.counts div:nth-child(3) {
		padding-right: 5px;
	}

	.counts dd {
		margin: 0;
	}

	.status {
		display: grid;
		grid-template-columns: 89px 89px 90px 89px 90px 1fr;
		align-items: center;
		height: 17px;
		padding-left: 92px;
		border-top: 1px solid #1d1c1d;
		background: #393839;
		color: #b9b8b9;
		font-family: Roboto, 'Noto Sans CJK SC', sans-serif;
		font-weight: 400;
		white-space: nowrap;
	}
</style>
